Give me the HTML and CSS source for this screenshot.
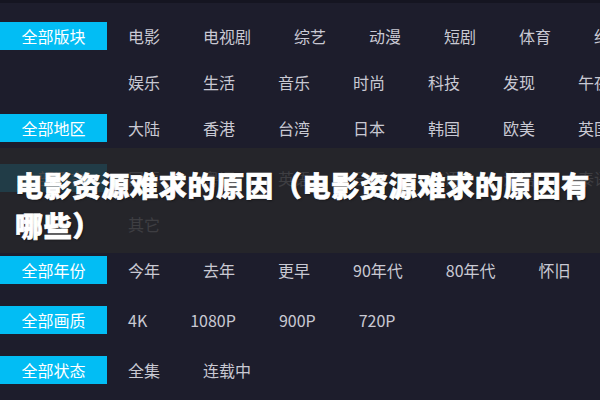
FILE: index.html
```html
<!DOCTYPE html>
<html lang="zh-CN">
<head>
<meta charset="utf-8">
<title>电影资源难求的原因</title>
<link rel="stylesheet" href="styles.css">
</head>
<body>
<div class="page">
  <div class="filters">
    <div class="row">
      <div class="label">全部版块</div>
      <div class="lines">
        <div class="line"><span>电影</span><span>电视剧</span><span>综艺</span><span>动漫</span><span>短剧</span><span>体育</span><span>纪录片</span></div>
        <div class="line"><span>娱乐</span><span>生活</span><span>音乐</span><span>时尚</span><span>科技</span><span>发现</span><span>午夜</span></div>
      </div>
    </div>
    <div class="row">
      <div class="label">全部地区</div>
      <div class="lines">
        <div class="line"><span>大陆</span><span>香港</span><span>台湾</span><span>日本</span><span>韩国</span><span>欧美</span><span>英国</span></div>
      </div>
    </div>
    <div class="row">
      <div class="label">全部语言</div>
      <div class="lines">
        <div class="line"><span>国语</span><span>粤语</span><span>英语</span><span>日语</span><span>韩语</span><span>法语</span><span>泰语</span></div>
        <div class="line"><span>其它</span></div>
      </div>
    </div>
    <div class="row">
      <div class="label">全部年份</div>
      <div class="lines">
        <div class="line"><span>今年</span><span>去年</span><span>更早</span><span>90年代</span><span>80年代</span><span>怀旧</span></div>
      </div>
    </div>
    <div class="row">
      <div class="label">全部画质</div>
      <div class="lines">
        <div class="line"><span>4K</span><span>1080P</span><span>900P</span><span>720P</span></div>
      </div>
    </div>
    <div class="row">
      <div class="label">全部状态</div>
      <div class="lines">
        <div class="line"><span>全集</span><span>连载中</span></div>
      </div>
    </div>
  </div>
  <div class="banner">
    <h1 class="title">电影资源难求的原因（电影资源难求的原因有哪些）</h1>
  </div>
</div>
</body>
</html>
```

FILE: styles.css
```css
html, body {
  margin: 0;
  padding: 0;
  width: 600px;
  height: 400px;
  overflow: hidden;
  background: #1d1d2c;
}

.page {
  position: relative;
  width: 600px;
  height: 400px;
  overflow: hidden;
  border-top: 3px solid #151521;
  box-sizing: border-box;
  font-family: "Noto Sans CJK SC", "Noto Sans", sans-serif;
}

.filters {
  padding-top: 19px;
}

.row {
  display: flex;
  align-items: flex-start;
  min-height: 50px;
}

.label {
  flex: 0 0 107px;
  height: 28px;
  line-height: 28px;
  background: #02bdf4;
  color: #ffffff;
  font-size: 16px;
  text-align: center;
}

.lines {
  margin-left: 21px;
}

.line {
  display: flex;
  gap: 43px;
  height: 28px;
  line-height: 29px;
  margin-bottom: 18px;
  white-space: nowrap;
  color: #c9c9d3;
  font-size: 16px;
}

.banner {
  position: absolute;
  left: 0;
  top: 145px;
  width: 600px;
  height: 105px;
  box-sizing: border-box;
  padding: 17px 10px 0 15px;
  background: rgba(38, 38, 42, 0.86);
}

.title {
  margin: 0;
  color: #ffffff;
  font-size: 28px;
  font-weight: 900;
  line-height: 40px;
  letter-spacing: 0.75px;
  -webkit-text-stroke: 0.7px #ffffff;
  text-shadow: 1px 1px 2px rgba(0, 0, 0, 0.5);
}
```
